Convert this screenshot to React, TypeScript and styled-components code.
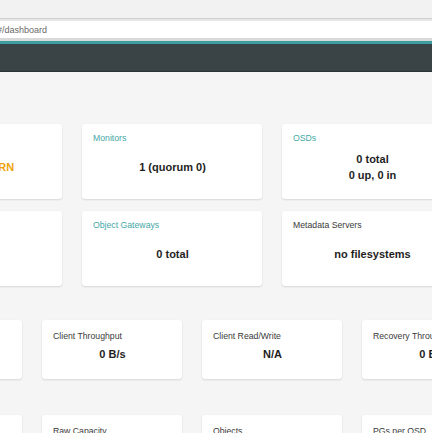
import React from "react";
import styled, { createGlobalStyle } from "styled-components";

const Global = createGlobalStyle`
  html, body { margin: 0; padding: 0; }
  body {
    background: #f5f5f5;
    font-family: "Liberation Sans", Arial, sans-serif;
    overflow: hidden;
    width: 432px;
    height: 433px;
  }
`;

const Chrome = styled.div`
  height: 18px;
  background: #f2f2f2;
  border-bottom: 1px solid #cfcfcf;
`;

const AddressBar = styled.div`
  height: 17px;
  background: #fff;
  border-top: 2px solid #e6e6e6;
  border-bottom: 3px solid #d9d9d9;
  display: flex;
  align-items: center;
  font-size: 9px;
  color: #6a6a6a;
  text-indent: -3px;
  white-space: nowrap;
`;

const NavBar = styled.div`
  height: 27px;
  background: #3a4447;
  border-top: 3px solid #3d9ea2;
  border-bottom: 1px solid #2c3436;
`;

const Main = styled.main`
  padding-top: 52px;
  margin-left: -118px;
  display: flex;
  flex-direction: column;
`;

const Row = styled.div<{ $gapAfter: number }>`
  display: flex;
  gap: 20px;
  margin-bottom: ${(p) => p.$gapAfter}px;
`;

const Card = styled.div<{ $w: number; $h: number }>`
  flex: 0 0 ${(p) => p.$w}px;
  height: ${(p) => p.$h}px;
  box-sizing: border-box;
  background: #fff;
  border-radius: 3px;
  box-shadow: 0 1px 2px rgba(0, 0, 0, 0.12), 0 0 1px rgba(0, 0, 0, 0.06);
  display: flex;
  flex-direction: column;
`;

const BigCard = styled(Card)`
  padding: 8px 10px 9px 11px;
`;

const SmallCard = styled(Card)`
  padding: 10px 10px 0 11px;
`;

const Title = styled.div<{ $link?: boolean }>`
  font-size: 8.7px;
  line-height: 12px;
  color: ${(p) => (p.$link ? "#45a8a6" : "#3a3a3a")};
  white-space: nowrap;
`;

const BigBody = styled.div`
  flex: 1;
  display: flex;
  flex-direction: column;
  align-items: center;
  justify-content: center;
`;

const Value = styled.div<{ $color?: string }>`
  font-size: 11px;
  font-weight: bold;
  line-height: 16.5px;
  color: ${(p) => p.$color || "#1e1e1e"};
  white-space: nowrap;
  text-align: center;
`;

const SmallValue = styled(Value)`
  margin-top: 5px;
  line-height: 14px;
`;

type Big = { title: string; link?: boolean; lines: string[]; color?: string };

const row1: Big[] = [
  { title: "Health", lines: ["HEALTH_WARN"], color: "#f0a30a" },
  { title: "Monitors", link: true, lines: ["1 (quorum 0)"] },
  { title: "OSDs", link: true, lines: ["0 total", "0 up, 0 in"] },
];
const row2: Big[] = [
  { title: "Manager Daemons", lines: ["1 active"] },
  { title: "Object Gateways", link: true, lines: ["0 total"] },
  { title: "Metadata Servers", lines: ["no filesystems"] },
];
const row3 = [
  { title: "Client IOPS", value: "0" },
  { title: "Client Throughput", value: "0 B/s" },
  { title: "Client Read/Write", value: "N/A" },
  { title: "Recovery Throughput", value: "0 B/s" },
];
const row4 = [
  { title: "Pools", value: "0" },
  { title: "Raw Capacity", value: "0 B" },
  { title: "Objects", value: "0" },
  { title: "PGs per OSD", value: "0" },
];

function BigRow({ items, gapAfter }: { items: Big[]; gapAfter: number }) {
  return (
    <Row $gapAfter={gapAfter}>
      {items.map((c) => (
        <BigCard key={c.title} $w={180} $h={75}>
          <Title $link={c.link}>{c.title}</Title>
          <BigBody>
            {c.lines.map((l) => (
              <Value key={l} $color={c.color}>
                {l}
              </Value>
            ))}
          </BigBody>
        </BigCard>
      ))}
    </Row>
  );
}

function SmallRow({
  items,
  gapAfter,
}: {
  items: { title: string; value: string }[];
  gapAfter: number;
}) {
  return (
    <Row $gapAfter={gapAfter}>
      {items.map((c) => (
        <SmallCard key={c.title} $w={140} $h={59}>
          <Title>{c.title}</Title>
          <SmallValue>{c.value}</SmallValue>
        </SmallCard>
      ))}
    </Row>
  );
}

export default function App() {
  return (
    <>
      <Global />
      <Chrome />
      <AddressBar>#/dashboard</AddressBar>
      <NavBar />
      <Main>
        <BigRow items={row1} gapAfter={12} />
        <BigRow items={row2} gapAfter={34} />
        <SmallRow items={row3} gapAfter={36} />
        <SmallRow items={row4} gapAfter={0} />
      </Main>
    </>
  );
}
